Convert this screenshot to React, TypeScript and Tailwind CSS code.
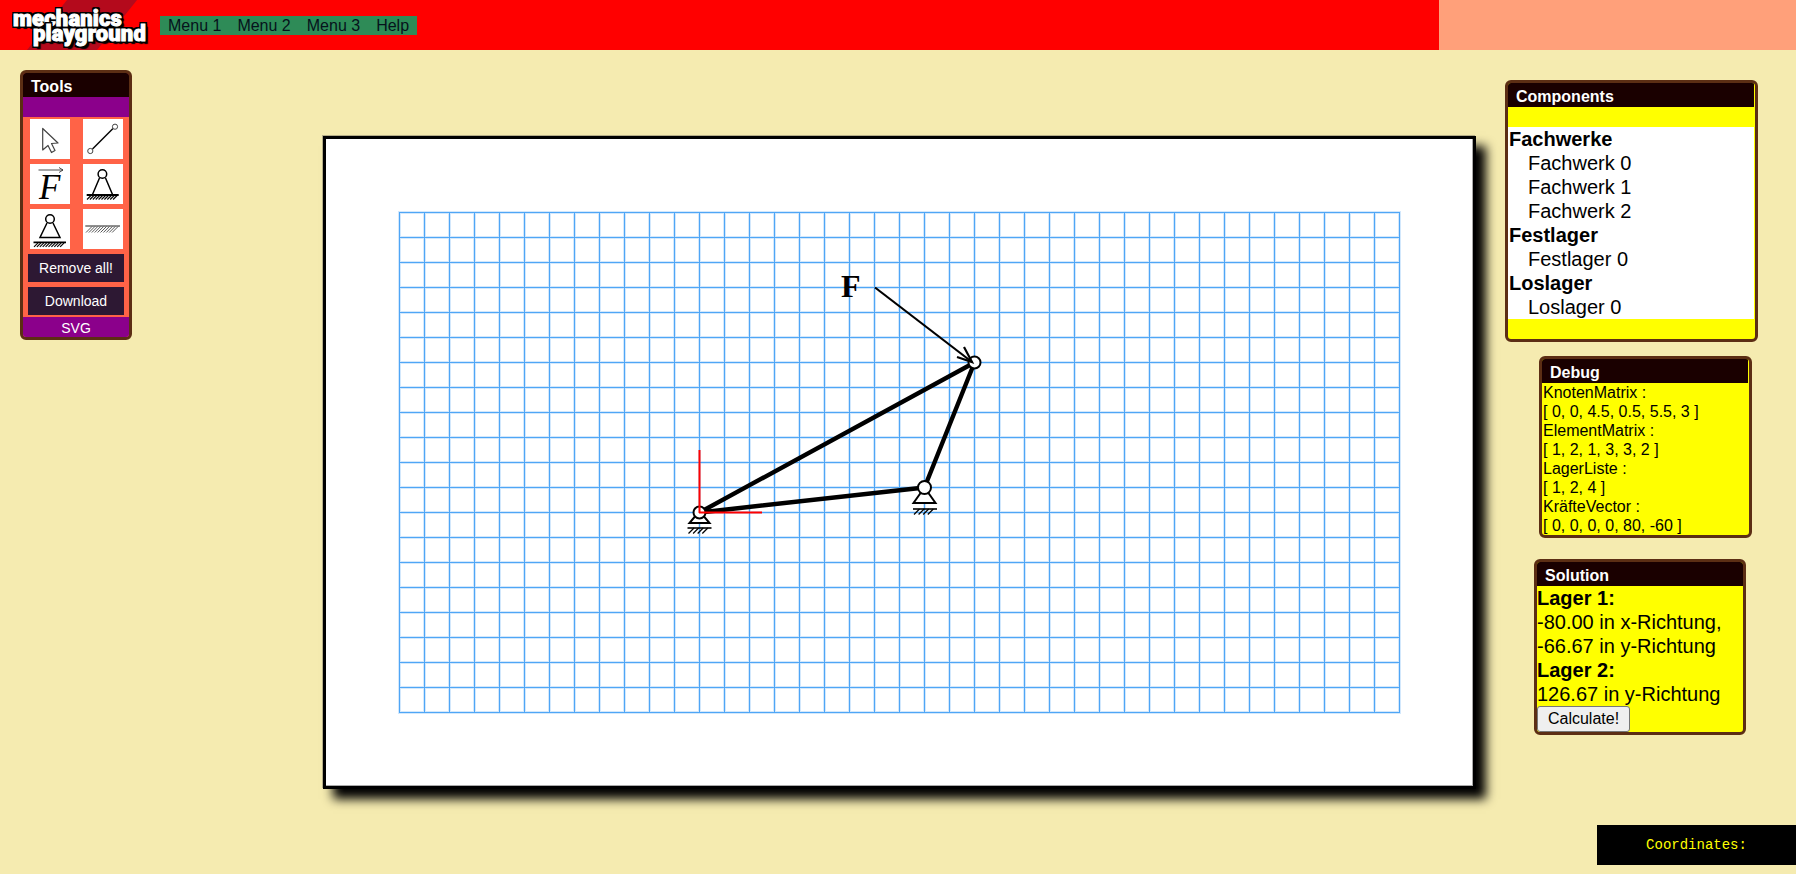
import React from "react";

const sans = "font-['Liberation_Sans',Arial,sans-serif]";

function Hatch({ x1, x2, y, h, step, sw = 1, color = "#000" }: { x1: number; x2: number; y: number; h: number; step: number; sw?: number; color?: string }) {
  const xs: number[] = [];
  for (let x = x1 + h; x <= x2; x += step) xs.push(x);
  return (
    <g stroke={color} strokeWidth={sw}>
      {xs.map((x) => (
        <line key={x} x1={x} y1={y} x2={x - h} y2={y + h} />
      ))}
    </g>
  );
}

function Support({ x, y }: { x: number; y: number }) {
  return (
    <g>
      <path d={`M${x} ${y} L${x - 10} ${y + 12} H${x + 10} Z`} fill="#fff" stroke="#000" strokeWidth={2} />
      <line x1={x - 12} x2={x + 12} y1={y + 17} y2={y + 17} stroke="#000" strokeWidth={1.6} />
      <Hatch x1={x - 11} x2={x + 11} y={y + 17} h={5.5} step={4.6} sw={1.2} />
    </g>
  );
}

function Drawing() {
  const cols = Array.from({ length: 41 }, (_, i) => 399.5 + i * 25);
  const rows = Array.from({ length: 21 }, (_, i) => 212.5 + i * 25);
  return (
    <svg width={1147} height={647} viewBox="326 139 1147 647" className="block">
      <g stroke="#d3e8fc" strokeWidth={3}>
        {cols.map((x) => (
          <line key={x} x1={x} x2={x} y1={211} y2={714} />
        ))}
        {rows.map((y) => (
          <line key={y} x1={398} x2={1401} y1={y} y2={y} />
        ))}
      </g>
      <g stroke="#4fa6f6" strokeWidth={1}>
        {cols.map((x) => (
          <line key={x} x1={x} x2={x} y1={212} y2={713} />
        ))}
        {rows.map((y) => (
          <line key={y} x1={399} x2={1400} y1={y} y2={y} />
        ))}
      </g>
      <Support x={699.5} y={511} />
      <g>
        <path d="M924.5 487.5 L913.5 503 H935.5 Z" fill="#fff" stroke="#000" strokeWidth={2} />
        <line x1={913} x2={937} y1={509} y2={509} stroke="#000" strokeWidth={1.6} />
        <Hatch x1={914} x2={936} y={509} h={5.5} step={4.6} sw={1.2} />
      </g>
      <g stroke="#000" strokeWidth={4.4} strokeLinecap="round">
        <line x1={699.5} y1={512.5} x2={924.5} y2={487.5} />
        <line x1={699.5} y1={512.5} x2={974.5} y2={362.5} />
        <line x1={924.5} y1={487.5} x2={974.5} y2={362.5} />
      </g>
      <circle cx={699.5} cy={512.5} r={6} fill="#fff" stroke="#000" strokeWidth={2} />
      <circle cx={924.5} cy={487.5} r={6.5} fill="#fff" stroke="#000" strokeWidth={2} />
      <circle cx={974.5} cy={362.5} r={6} fill="#fff" stroke="#000" strokeWidth={2} />
      <g stroke="#000" strokeWidth={2.2} fill="none">
        <line x1={875} y1={287.5} x2={972} y2={362} />
        <path d="M964 347 L972 362 L957 357" />
      </g>
      <g stroke="#f00" strokeWidth={2}>
        <line x1={699.5} y1={450} x2={699.5} y2={513} />
        <line x1={699} y1={512.5} x2={762} y2={512.5} />
      </g>
      <text x={841} y={297} fontFamily="'Liberation Serif',serif" fontWeight={700} fontSize={32} fill="#000">F</text>
    </svg>
  );
}

function ToolIcon({ kind }: { kind: number }) {
  return (
    <svg width={40} height={40} viewBox="0 0 40 40" className="block bg-white overflow-visible">
      {kind === 0 && (
        <path d="M12.7 9.5 V31 L18 26.5 L21.5 33.5 L25 31.5 L21.5 24.5 L28 24 Z" fill="#fff" stroke="#444" strokeWidth={1.2} strokeLinejoin="round" />
      )}
      {kind === 1 && (
        <g fill="#fff" stroke="#000">
          <line x1={9.5} y1={30} x2={30} y2={9.5} strokeWidth={1.4} />
          <circle cx={32} cy={7.7} r={2.6} stroke="#444" strokeWidth={1} />
          <circle cx={7.3} cy={32} r={2.6} stroke="#444" strokeWidth={1} />
        </g>
      )}
      {kind === 2 && (
        <g>
          <g stroke="#222" strokeWidth={0.8} fill="none">
            <line x1={8.5} x2={33} y1={6} y2={6} />
            <path d="M29 3.5 L33 6 L29 8.5" />
          </g>
          <text x={9} y={34.5} fontFamily="'Liberation Serif',serif" fontStyle="italic" fontSize={35} fill="#000">F</text>
        </g>
      )}
      {kind === 3 && (
        <g fill="none" stroke="#000" strokeWidth={1.5}>
          <path d="M16.5 14 L9.5 30.5 M22.5 14 L29.5 30.5" />
          <circle cx={19.4} cy={10} r={4.3} strokeWidth={1.5} />
          <line x1={3.7} x2={35.7} y1={31} y2={31} strokeWidth={1.8} />
          <Hatch x1={4} x2={36} y={31.5} h={4} step={2.9} sw={1.1} />
        </g>
      )}
      {kind === 4 && (
        <g fill="none" stroke="#000" strokeWidth={1.5}>
          <path d="M17 14 L10 28.5 H30 L23 14" />
          <circle cx={20} cy={10} r={4.3} strokeWidth={1.5} />
          <line x1={3.5} x2={36} y1={33.3} y2={33.3} strokeWidth={1.8} />
          <Hatch x1={4} x2={36} y={33.8} h={4} step={2.9} sw={1.1} />
        </g>
      )}
      {kind === 5 && (
        <g>
          <line x1={2.3} x2={37} y1={17} y2={17} stroke="#222" strokeWidth={1.2} />
          <Hatch x1={3} x2={37} y={17.5} h={6} step={2.9} sw={0.9} color="#444" />
        </g>
      )}
    </svg>
  );
}

function Panel({ title, className, titleClass = "", children }: { title: string; className: string; titleClass?: string; children: React.ReactNode }) {
  return (
    <section className={`border-[3px] border-[#5c2e14] rounded-[6px] overflow-hidden ${className}`}>
      <h2 className={`h-[24px] pt-[4px] leading-[20px] pl-2 bg-[#1a0000] text-white font-bold text-[16px] ${titleClass}`}>{title}</h2>
      {children}
    </section>
  );
}

const components: [string, boolean][] = [
  ["Fachwerke", true],
  ["Fachwerk 0", false],
  ["Fachwerk 1", false],
  ["Fachwerk 2", false],
  ["Festlager", true],
  ["Festlager 0", false],
  ["Loslager", true],
  ["Loslager 0", false],
];

const debug = [
  "KnotenMatrix :",
  "[ 0, 0, 4.5, 0.5, 5.5, 3 ]",
  "ElementMatrix :",
  "[ 1, 2, 1, 3, 3, 2 ]",
  "LagerListe :",
  "[ 1, 2, 4 ]",
  "KräfteVector :",
  "[ 0, 0, 0, 0, 80, -60 ]",
];

const logoText =
  "block font-['Roboto',sans-serif] font-black text-[22px] leading-[15px] tracking-[0.15px] text-white [-webkit-text-stroke:1px_white] [text-shadow:2px_0_0_#000,-2px_0_0_#000,0_2px_0_#000,0_-2px_0_#000,2px_2px_0_#000,-2px_-2px_0_#000,2px_-2px_0_#000,-2px_2px_0_#000,3px_3px_1px_#000]";

export default function App() {
  return (
    <div className={`min-h-screen bg-[#f5ebb0] text-black ${sans}`}>
      <header className="flex h-[50px]">
        <div className="w-[1439px] bg-[#ff0000] flex items-start">
          <div className="relative w-[160px] h-[50px] shrink-0 overflow-hidden pt-[11px] pl-[13px]">
            <svg width={160} height={50} viewBox="0 0 160 50" className="absolute left-0 top-0">
              <polygon points="67,0 137,0 97,50 27,50" fill="#b40a1c" />
            </svg>
            <span className={`relative ${logoText}`}>mechanics</span>
            <span className={`relative ml-[20px] ${logoText}`}>playground</span>
          </div>
          <nav className="mt-[16px] h-[19px] w-[257px] bg-[#2e8b57] flex pl-[8px] gap-[16px] text-[16px] leading-[19px] text-[#06121c]">
            <span>Menu 1</span>
            <span>Menu 2</span>
            <span>Menu 3</span>
            <span>Help</span>
          </nav>
        </div>
        <div className="flex-1 bg-[#ffa07a]" />
      </header>

      <main className="flex items-start">
        <aside className="ml-[20px] mt-[20px] w-[112px] shrink-0 border-[3px] border-[#5c2e14] rounded-[6px] overflow-hidden bg-[#ff6347]">
          <h2 className="h-[24px] pt-[4px] leading-[20px] pl-2 bg-[#1a0000] text-white font-bold text-[16px]">Tools</h2>
          <div className="h-[20px] bg-[#8b008b]" />
          <div className="grid grid-cols-[40px_40px] justify-between gap-y-[5px] pt-[2px] pl-[7px] pr-[6px]">
            {[0, 1, 2, 3, 4, 5].map((k) => (
              <ToolIcon key={k} kind={k} />
            ))}
          </div>
          <div className="flex flex-col gap-[5px] mt-[5px] mx-[5px] mb-[2px]">
            <button className="h-[28px] w-[96px] bg-[#2d1833] text-white text-[14px]">Remove all!</button>
            <button className="h-[28px] w-[96px] bg-[#2d1833] text-white text-[14px]">Download</button>
          </div>
          <div className="h-[20px] bg-[#8b008b] text-white text-[14px] pt-[2px] leading-[18px] text-center">SVG</div>
        </aside>

        <div className="ml-[191px] mt-[86px] shrink-0 border-[3px] border-black bg-white shadow-[-1px_-1px_0_#b5ae88,10px_10px_10px_#000,inset_-1px_-1px_0_#aaa]">
          <Drawing />
        </div>

        <div className="ml-[29px] w-[291px] shrink-0 flex flex-col">
          <Panel title="Components" titleClass="mr-px" className="mt-[30px] w-[253px] bg-[#ffff00]">
            <div className="h-[20px]" />
            <ul className="bg-white text-[20px] leading-[24px] pl-px mr-px">
              {components.map(([t, b]) => (
                <li key={t} className={b ? "font-bold" : "pl-[19px]"}>{t}</li>
              ))}
            </ul>
            <div className="h-[20px]" />
          </Panel>
          <Panel title="Debug" titleClass="mr-px" className="mt-[14px] ml-[34px] w-[213px] bg-[#ffff00]">
            <div className="text-[16px] leading-[19px] pl-px">
              {debug.map((t) => (
                <div key={t}>{t}</div>
              ))}
            </div>
          </Panel>
          <Panel title="Solution" className="mt-[21px] ml-[29px] w-[212px] bg-[#ffff00]">
            <div className="text-[20px] leading-[24px]">
              <div className="font-bold">Lager 1:</div>
              <div>-80.00 in x-Richtung,</div>
              <div>-66.67 in y-Richtung</div>
              <div className="font-bold">Lager 2:</div>
              <div>126.67 in y-Richtung</div>
            </div>
            <button className="block h-[26px] w-[93px] bg-[#efefef] border border-[#767676] rounded-[3px] text-[16px] leading-[22px]">Calculate!</button>
          </Panel>
          <div className="mt-[90px] ml-[92px] w-[199px] h-[40px] pt-[1px] bg-black text-[#ffff00] font-['Liberation_Mono',monospace] text-[14px] leading-[39px] text-center">Coordinates:</div>
        </div>
      </main>
    </div>
  );
}
